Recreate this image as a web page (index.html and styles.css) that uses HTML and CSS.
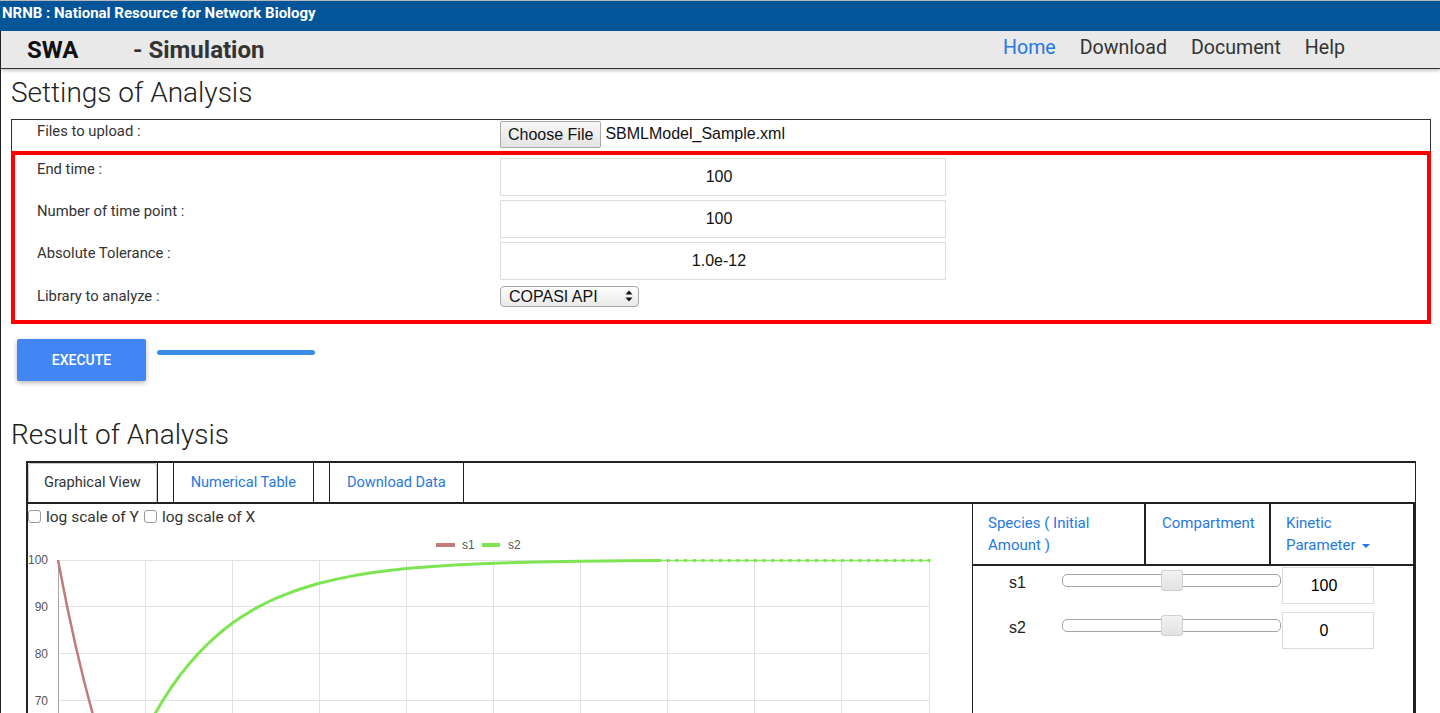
FILE: index.html
```html
<!DOCTYPE html>
<html lang="en">
<head>
<meta charset="utf-8">
<title>SWA - Simulation</title>
<link rel="stylesheet" href="styles.css">
</head>
<body>
<div class="topbar">NRNB : National Resource for Network Biology</div>
<div class="page">
  <header class="navbar">
    <div class="brand"><span class="brand-main">SWA</span><span class="brand-sub">- Simulation</span></div>
    <nav class="links">
      <a class="active">Home</a>
      <a>Download</a>
      <a>Document</a>
      <a>Help</a>
    </nav>
  </header>

  <main class="main">
    <h2 class="section-title">Settings of Analysis</h2>
    <div class="settings">
      <div class="file-row">
        <div class="label">Files to upload :</div>
        <div class="field"><button class="file-btn">Choose File</button><span class="file-name">SBMLModel_Sample.xml</span></div>
      </div>
      <div class="highlight">
        <div class="row">
          <div class="label">End time :</div>
          <div class="field"><input class="num" value="100"></div>
        </div>
        <div class="row">
          <div class="label">Number of time point :</div>
          <div class="field"><input class="num" value="100"></div>
        </div>
        <div class="row">
          <div class="label">Absolute Tolerance :</div>
          <div class="field"><input class="num" value="1.0e-12"></div>
        </div>
        <div class="row select-row">
          <div class="label">Library to analyze :</div>
          <div class="field">
            <span class="select">
              <select><option>COPASI API</option></select>
              <svg class="select-arrows" width="8" height="12" viewBox="0 0 8 12"><path d="M4 0.5 L7.5 4.5 L0.5 4.5 Z M4 11.5 L7.5 7.5 L0.5 7.5 Z" fill="#111"/></svg>
            </span>
          </div>
        </div>
      </div>
    </div>

    <div class="actions">
      <button class="execute">EXECUTE</button>
      <div class="progress"></div>
    </div>

    <h2 class="section-title result-title">Result of Analysis</h2>
    <div class="result">
      <ul class="tabs">
        <li class="tab active"><a>Graphical View</a></li>
        <li class="tab"><a>Numerical Table</a></li>
        <li class="tab"><a>Download Data</a></li>
      </ul>
      <div class="result-body">
        <div class="graph">
          <div class="log-opts">
            <label class="opt"><span class="cb"></span>log scale of Y</label>
            <label class="opt"><span class="cb"></span>log scale of X</label>
          </div>
          <svg class="chart" width="944" height="183" viewBox="0 0 944 183">
            <g stroke="#e1e1e1" stroke-width="1">
              <line x1="117.5" y1="30" x2="117.5" y2="183"/>
              <line x1="204.5" y1="30" x2="204.5" y2="183"/>
              <line x1="291.5" y1="30" x2="291.5" y2="183"/>
              <line x1="378.5" y1="30" x2="378.5" y2="183"/>
              <line x1="465.5" y1="30" x2="465.5" y2="183"/>
              <line x1="552.5" y1="30" x2="552.5" y2="183"/>
              <line x1="639.5" y1="30" x2="639.5" y2="183"/>
              <line x1="726.5" y1="30" x2="726.5" y2="183"/>
              <line x1="813.5" y1="30" x2="813.5" y2="183"/>
              <line x1="901.5" y1="30" x2="901.5" y2="183"/>
              <line x1="30" y1="30.5" x2="902" y2="30.5"/>
              <line x1="30" y1="76.5" x2="902" y2="76.5"/>
              <line x1="30" y1="123.5" x2="902" y2="123.5"/>
              <line x1="30" y1="170.5" x2="902" y2="170.5"/>
            </g>
            <line x1="30.5" y1="30" x2="30.5" y2="183" stroke="#a8a8a8" stroke-width="1"/>
            <g class="axis-labels" text-anchor="end">
              <text x="20" y="34">100</text>
              <text x="20" y="81">90</text>
              <text x="20" y="128">80</text>
              <text x="20" y="175">70</text>
            </g>
            <g class="legend">
              <line x1="408" y1="15" x2="427" y2="15" stroke="#c07b7b" stroke-width="4"/>
              <text x="434" y="19">s1</text>
              <line x1="454" y1="15" x2="472" y2="15" stroke="#7de552" stroke-width="4"/>
              <text x="480" y="19">s2</text>
            </g>
            <polyline fill="none" stroke="#c07b7b" stroke-width="2.5" stroke-linejoin="round"
              points="30,30 38.7,74.5 47.4,114.8 56.1,151.3 64.8,184.3 73.6,214.1 82.3,241.2"/>
            <polyline fill="none" stroke="#7de552" stroke-width="3" stroke-linejoin="round"
              points="30,498 38.7,453.5 47.4,413.2 56.1,376.7 64.8,343.7 73.6,313.9 82.3,286.8 91,262.4 99.7,240.3 108.4,220.3 117.1,202.2 125.8,185.8 134.5,171 143.2,157.5 151.9,145.4 160.7,134.4 169.4,124.5 178.1,115.5 186.8,107.4 195.5,100 204.2,93.3 212.9,87.3 221.6,81.9 230.3,76.9 239,72.5 247.8,68.4 256.5,64.8 265.2,61.5 273.9,58.5 291.3,53.3 308.7,49.1 326.1,45.6 343.6,42.8 361,40.5 378.4,38.6 404.5,36.4 430.7,34.7 465.5,33.2 509.1,31.9 552.6,31.2 596.2,30.7 631,30.5"/>
            <line x1="631" y1="30.5" x2="901" y2="30.5" stroke="#8de866" stroke-width="1.5"/>
            <g fill="#7de552">
              <rect x="630" y="29" width="3" height="3"/><rect x="638.7" y="29" width="3" height="3"/><rect x="647.4" y="29" width="3" height="3"/><rect x="656.1" y="29" width="3" height="3"/><rect x="664.8" y="29" width="3" height="3"/><rect x="673.6" y="29" width="3" height="3"/><rect x="682.3" y="29" width="3" height="3"/><rect x="691" y="29" width="3" height="3"/><rect x="699.7" y="29" width="3" height="3"/><rect x="708.4" y="29" width="3" height="3"/><rect x="717.1" y="29" width="3" height="3"/><rect x="725.8" y="29" width="3" height="3"/><rect x="734.5" y="29" width="3" height="3"/><rect x="743.2" y="29" width="3" height="3"/><rect x="751.9" y="29" width="3" height="3"/><rect x="760.7" y="29" width="3" height="3"/><rect x="769.4" y="29" width="3" height="3"/><rect x="778.1" y="29" width="3" height="3"/><rect x="786.8" y="29" width="3" height="3"/><rect x="795.5" y="29" width="3" height="3"/><rect x="804.2" y="29" width="3" height="3"/><rect x="812.9" y="29" width="3" height="3"/><rect x="821.6" y="29" width="3" height="3"/><rect x="830.3" y="29" width="3" height="3"/><rect x="839" y="29" width="3" height="3"/><rect x="847.8" y="29" width="3" height="3"/><rect x="856.5" y="29" width="3" height="3"/><rect x="865.2" y="29" width="3" height="3"/><rect x="873.9" y="29" width="3" height="3"/><rect x="882.6" y="29" width="3" height="3"/><rect x="891.3" y="29" width="3" height="3"/><rect x="899.5" y="29" width="3" height="3"/>
            </g>
          </svg>
        </div>
        <div class="params">
          <div class="param-head">
            <div class="ph">Species ( Initial<br>Amount )</div>
            <div class="ph ph-mid">Compartment</div>
            <div class="ph">Kinetic<br>Parameter <span class="caret"></span></div>
          </div>
          <div class="param-row">
            <div class="pname">s1</div>
            <div class="slider"><span class="thumb"></span></div>
            <input class="pval" value="100">
          </div>
          <div class="param-row">
            <div class="pname">s2</div>
            <div class="slider"><span class="thumb"></span></div>
            <input class="pval" value="0">
          </div>
        </div>
      </div>
    </div>
  </main>
</div>
</body>
</html>
```

FILE: styles.css
```css
* { box-sizing: border-box; }
html, body { margin: 0; padding: 0; }
body {
  font-family: Roboto, "Liberation Sans", Arial, sans-serif;
  color: #333;
  background: #fff;
}

.topbar {
  height: 31px;
  border-top: 1px solid #b9b9b9;
  background: #03559a;
  color: #fff;
  font-weight: 700;
  font-size: 15px;
  line-height: 24px;
  padding-left: 2px;
}

.page { border-left: 1px solid #222; }

.navbar {
  display: flex;
  align-items: center;
  height: 38px;
  background: #e9e9e9;
  border-bottom: 1px solid #333;
  box-shadow: 0 2px 3px rgba(0, 0, 0, 0.22);
}
.brand {
  display: flex;
  padding-left: 26px;
  font-size: 24px;
  font-weight: 700;
}
.brand-main { width: 106px; color: #111; }
.brand-sub { color: #333; }
.links {
  margin-left: auto;
  display: flex;
  gap: 24px;
  padding-right: 95px;
  padding-bottom: 4px;
  font-size: 19.6px;
}
.links a { color: #333; cursor: pointer; }
.links a.active { color: #2478e0; }

.main { padding: 6px 0 0 10px; }
.section-title {
  margin: 0;
  font-size: 28px;
  font-weight: 300;
  line-height: 36px;
  color: #222;
}

.settings { margin-top: 8px; width: 1420px; font-size: 14.8px; }
.file-row {
  display: grid;
  grid-template-columns: 488px 1fr;
  height: 32px;
  border: 1px solid #333;
  border-bottom: 0;
}
.file-row .label { padding-left: 25px; line-height: 20px; padding-top: 1px; }
.file-row .field { padding-top: 1px; display: flex; align-items: flex-start; }
.file-btn {
  height: 27px;
  padding: 0 7px;
  font: 16px "Liberation Sans", Arial, sans-serif;
  color: #111;
  border: 1px solid #a9a9a9;
  border-radius: 2px;
  background: linear-gradient(#f7f7f7, #e4e4e4);
}
.file-name {
  margin-left: 4px;
  font: 16px/26px "Liberation Sans", Arial, sans-serif;
  color: #111;
}

.highlight { border: 4px solid #ff0000; }
.row {
  display: grid;
  grid-template-columns: 485px 1fr;
  padding: 3px 0 1px;
}
.row .label { padding-left: 22px; padding-top: 1px; line-height: 20px; }
.num {
  display: block;
  width: 446px;
  height: 38px;
  padding: 0 8px 0 0;
  border: 1px solid #ddd;
  text-align: center;
  font: 16px "Liberation Sans", Arial, sans-serif;
  color: #111;
  outline: none;
}
.select-row { padding: 5px 0 13px; }
.select-row .label { padding-top: 0; }
.select {
  position: relative;
  display: block;
  width: 139px;
  height: 21px;
  border: 1px solid #a6a6a6;
  border-radius: 4px;
  background: linear-gradient(#fdfdfd, #e9e9e9);
}
.select select {
  appearance: none;
  -webkit-appearance: none;
  width: 100%;
  height: 19px;
  border: 0;
  background: transparent;
  padding: 0 0 0 8px;
  font: 16px/19px "Liberation Sans", Arial, sans-serif;
  color: #111;
  outline: none;
}
.select-arrows { position: absolute; right: 5px; top: 3px; }

.actions { display: flex; margin: 15px 0 0 6px; }
.execute {
  width: 129px;
  height: 42px;
  border: 0;
  border-radius: 2px;
  background: #4285f4;
  color: #fff;
  font: 500 14px Roboto, sans-serif;
  box-shadow: 0 2px 5px rgba(0, 0, 0, 0.28);
}
.progress {
  width: 158px;
  height: 5px;
  margin: 11px 0 0 11px;
  border-radius: 3px;
  background: #3a8ee6;
}

.result-title { margin-top: 36px; }
.result {
  width: 1390px;
  margin: 8px 0 0 15px;
  border-top: 2px solid #222;
  border-left: 2px solid #222;
  border-right: 1px solid #222;
}
.tabs {
  display: flex;
  list-style: none;
  margin: 0;
  padding: 0;
  height: 41px;
  border-bottom: 2px solid #222;
}
.tab {
  margin-left: 15px;
  border-left: 1px solid #222;
  border-right: 1px solid #222;
}
.tab:first-child { margin-left: 0; border-left: 0; }
.tab a {
  display: block;
  height: 100%;
  padding: 0 17px;
  line-height: 39px;
  font-size: 14.6px;
  color: #2478e0;
  cursor: pointer;
}
.tab.active a {
  padding: 0 15px;
  line-height: 37px;
  border: 1px solid #c8c8c8;
  border-bottom: 0;
  border-radius: 3px 3px 0 0;
  color: #333;
}

.result-body { display: flex; height: 209px; }
.graph { width: 944px; }
.log-opts {
  display: flex;
  align-items: center;
  gap: 5px;
  height: 25px;
  font-size: 15.5px;
}
.opt { display: flex; align-items: center; gap: 5px; }
.cb {
  width: 13px;
  height: 13px;
  border: 1px solid #9a9a9a;
  border-radius: 3px;
  background: #fff;
}
.chart { display: block; margin-top: 1px; }
.chart text {
  font-family: "Liberation Sans", Arial, sans-serif;
  font-size: 12px;
  fill: #555;
}

.params {
  width: 443px;
  border-left: 1px solid #222;
  border-right: 2px solid #222;
}
.param-head {
  display: grid;
  grid-template-columns: 173px 125px 1fr;
  height: 62px;
  border-bottom: 2px solid #222;
}
.ph {
  padding: 8px 10px 0 15px;
  line-height: 22px;
  font-size: 15px;
  color: #2478e0;
}
.ph:not(:last-child) { border-right: 2px solid #222; }
.ph-mid { padding-left: 16px; }
.caret {
  display: inline-block;
  margin-left: 3px;
  vertical-align: middle;
  border-left: 4px solid transparent;
  border-right: 4px solid transparent;
  border-top: 4px solid #2478e0;
}
.param-row {
  display: grid;
  grid-template-columns: 88px 219px 92px;
  column-gap: 1px;
  height: 45px;
  padding-top: 1px;
}
.pname {
  padding: 6px 0 0 36px;
  font: 16px/20px "Liberation Sans", Arial, sans-serif;
  color: #222;
}
.slider {
  position: relative;
  height: 13px;
  margin-top: 7px;
  border: 1px solid #a5a5a5;
  border-radius: 5px;
  background: #fff;
}
.thumb {
  position: absolute;
  left: 98px;
  top: -5px;
  width: 22px;
  height: 21px;
  border: 1px solid #cfcfcf;
  border-radius: 3px;
  background: linear-gradient(#f2f2f2, #e2e2e2);
}
.pval {
  width: 92px;
  height: 37px;
  padding: 0 8px 0 0;
  border: 1px solid #ddd;
  text-align: center;
  font: 16px "Liberation Sans", Arial, sans-serif;
  color: #000;
  outline: none;
}
```
